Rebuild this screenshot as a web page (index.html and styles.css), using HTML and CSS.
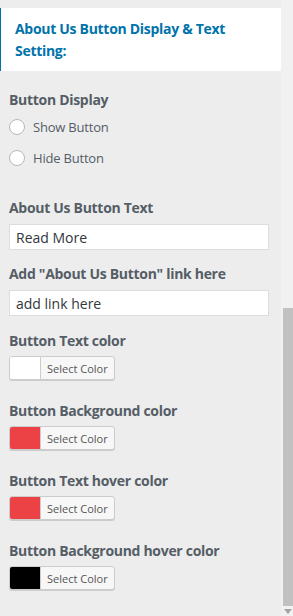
FILE: index.html
```html
<!DOCTYPE html>
<html lang="en">
<head>
  <meta charset="UTF-8">
  <meta name="viewport" content="width=device-width, initial-scale=1.0">
  <title>About Us Button Settings</title>
  <link rel="stylesheet" href="styles.css">
</head>
<body>
  <div class="frame">
    <div class="panel">
      <h3 class="section-title">About Us Button Display &amp; Text Setting:</h3>

      <div class="control radios">
        <span class="label">Button Display</span>
        <label class="radio"><span class="dot"></span>Show Button</label>
        <label class="radio"><span class="dot"></span>Hide Button</label>
      </div>

      <div class="control field">
        <span class="label">About Us Button Text</span>
        <input class="text-input" type="text" value="Read More">
      </div>

      <div class="control field">
        <span class="label">Add "About Us Button" link here</span>
        <input class="text-input" type="text" value="add link here">
      </div>

      <div class="control color">
        <span class="label">Button Text color</span>
        <button class="color-btn"><span class="swatch white"></span><span class="pick">Select Color</span></button>
      </div>

      <div class="control color">
        <span class="label">Button Background color</span>
        <button class="color-btn"><span class="swatch red"></span><span class="pick">Select Color</span></button>
      </div>

      <div class="control color">
        <span class="label">Button Text hover color</span>
        <button class="color-btn"><span class="swatch red"></span><span class="pick">Select Color</span></button>
      </div>

      <div class="control color">
        <span class="label">Button Background hover color</span>
        <button class="color-btn"><span class="swatch black"></span><span class="pick">Select Color</span></button>
      </div>
    </div>

    <div class="scrollbar">
      <div class="track-gap"></div>
      <div class="thumb"></div>
      <div class="arrow"></div>
    </div>
  </div>
</body>
</html>
```

FILE: styles.css
```css
body {
  margin: 0;
  background: #ededed;
  font-family: "Open Sans", sans-serif;
  color: #555d66;
}

.frame {
  display: flex;
  height: 616px;
  overflow: hidden;
}

.panel {
  width: 281px;
  flex-shrink: 0;
}

.section-title {
  margin: 8px 0 0;
  padding: 10px 10px 9px 14px;
  background: #fff;
  border-left: 1px solid #0073aa;
  color: #0073aa;
  font-size: 14px;
  font-weight: 700;
  line-height: 22px;
  letter-spacing: -0.3px;
}

.control {
  padding: 0 12px 0 9px;
  display: flex;
  flex-direction: column;
  align-items: flex-start;
}

.radios {
  margin-top: 19px;
}

.field {
  margin-top: 14px;
}

.radios + .field {
  margin-top: 18px;
}

.color {
  margin-top: 15px;
}

.color + .color {
  margin-top: 21px;
}

.label {
  font-size: 14px;
  font-weight: 700;
  line-height: 20px;
  letter-spacing: -0.3px;
  margin-bottom: 6px;
  white-space: nowrap;
}

.radios .label {
  margin-bottom: 8px;
}

.color .label {
  margin-bottom: 5px;
}

.radio {
  display: flex;
  align-items: center;
  font-size: 13px;
  line-height: 18px;
  height: 18px;
  margin-bottom: 13px;
  letter-spacing: -0.2px;
  color: #555d66;
}

.dot {
  width: 14px;
  height: 14px;
  border: 1px solid #b4b9be;
  border-radius: 50%;
  background: #fff;
  margin-right: 8px;
}

.text-input {
  box-sizing: border-box;
  width: 260px;
  height: 26px;
  margin: 0;
  padding: 0 6px;
  border: 1px solid #ddd;
  background: #fff;
  font-family: "Open Sans", sans-serif;
  font-size: 14px;
  color: #32373c;
}

.color-btn {
  display: flex;
  align-items: stretch;
  height: 24px;
  padding: 0;
  margin: 0;
  border: 1px solid #ccc;
  border-radius: 3px;
  background: #f7f7f7;
  box-shadow: 0 1px 0 #ccc;
  overflow: hidden;
  font-family: "Open Sans", sans-serif;
}

.swatch {
  width: 30px;
  border-right: 1px solid #ccc;
}

.white { background: #fff; }
.red { background: #ec4246; }
.black { background: #000; }

.pick {
  display: flex;
  align-items: center;
  padding: 0 6px;
  font-size: 11px;
  color: #555;
}

.scrollbar {
  width: 12px;
  background: #f1f1f1;
  display: flex;
  flex-direction: column;
  align-items: flex-end;
}

.track-gap {
  height: 308px;
}

.thumb {
  width: 10px;
  height: 298px;
  background: #c1c1c1;
}

.arrow {
  margin: 3px 1px 0 0;
  width: 0;
  height: 0;
  border-left: 4px solid transparent;
  border-right: 4px solid transparent;
  border-top: 5px solid #a3a3a3;
}
```
